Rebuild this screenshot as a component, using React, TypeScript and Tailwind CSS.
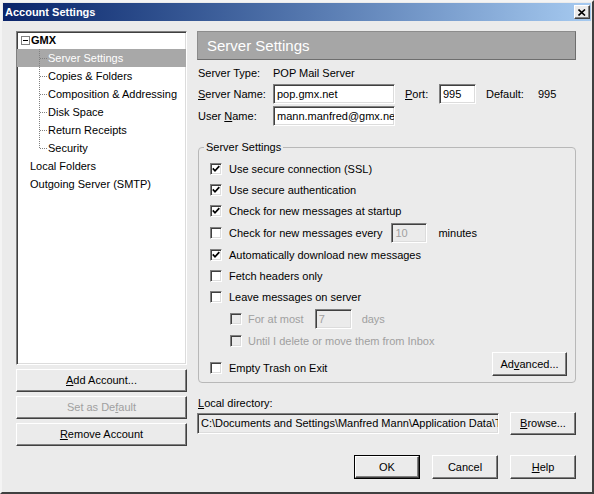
import React from "react";

const font = "font-['Liberation_Sans',Arial,sans-serif]";
const sunken =
  "border border-t-[#808080] border-l-[#808080] border-b-white border-r-white shadow-[inset_1px_1px_0_#404040,inset_-1px_-1px_0_#dcdcdc]";
const raised =
  "border border-t-white border-l-white border-b-[#404040] border-r-[#404040] shadow-[inset_-1px_-1px_0_#808080] bg-[#ebebeb]";

const U = ({ children }: { children: React.ReactNode }) => <span className="underline">{children}</span>;

const Btn = ({
  children,
  className = "",
  disabled = false,
}: {
  children: React.ReactNode;
  className?: string;
  disabled?: boolean;
}) => (
  <div
    className={`${raised} flex items-center justify-center ${disabled ? "text-[#a0a0a0]" : "text-black"} ${className}`}
  >
    <span>{children}</span>
  </div>
);

const Check = ({ checked = false, disabled = false }: { checked?: boolean; disabled?: boolean }) => (
  <span
    className={`${sunken} flex h-[12px] w-[12px] flex-none items-center justify-center ${
      disabled ? "bg-[#ebebeb]" : "bg-white"
    }`}
  >
    {checked && (
      <svg width="8" height="8" viewBox="0 0 8 8">
        <polyline points="0.8,3.4 3,5.8 7.3,1.2" fill="none" stroke="#000" strokeWidth="1.7" />
      </svg>
    )}
  </span>
);

const Connector = ({ last = false }: { last?: boolean }) => (
  <svg width="9" height="18" viewBox="0 0 9 18" className="flex-none">
    <line x1="0.5" y1="0" x2="0.5" y2={last ? 9 : 18} stroke="#808080" strokeDasharray="1 1" />
    <line x1="1" y1="9.5" x2="8" y2="9.5" stroke="#808080" strokeDasharray="1 1" />
  </svg>
);

const children = ["Server Settings", "Copies & Folders", "Composition & Addressing", "Disk Space", "Return Receipts", "Security"];

const Row = ({
  h,
  children,
  className = "",
}: {
  h: string;
  children: React.ReactNode;
  className?: string;
}) => <div className={`flex items-center ${h} ${className}`}>{children}</div>;

export default function App() {
  return (
    <div
      className={`${font} flex h-[494px] w-[594px] flex-col border-2 border-t-[#f4f4f4] border-l-[#f4f4f4] border-b-[#404040] border-r-[#404040] bg-[#ebebeb] p-[1px] text-[11px] leading-[13px] text-black`}
    >
      {/* title bar */}
      <div className="flex h-[18px] flex-none items-center justify-between bg-gradient-to-r from-[#0a246a] to-[#a6caf0] pl-[2px] pr-[1px]">
        <span className="text-[11px] font-bold text-white">Account Settings</span>
        <div className={`${raised} flex h-[14px] w-[16px] items-center justify-center`}>
          <svg width="8" height="7" viewBox="0 0 8 7">
            <path d="M0.5 0.5 L7 6.5 M7 0.5 L0.5 6.5" stroke="#000" strokeWidth="1.6" />
          </svg>
        </div>
      </div>

      <div className="flex flex-1 pl-[13px] pt-[10px]">
        {/* left column */}
        <div className="flex w-[171px] flex-col">
          <div className={`${sunken} h-[334px] bg-white`}>
            <div className="flex h-[17px] items-center pl-[4px]">
              <span className="flex h-[9px] w-[9px] items-center justify-center border border-[#808080] bg-white">
                <span className="h-[1px] w-[5px] bg-black" />
              </span>
              <span className="ml-[1px] font-bold">GMX</span>
            </div>
            {children.map((c, i) => (
              <div
                key={c}
                className={`flex h-[18px] items-center pl-[22px] ${i === 0 ? "bg-[#a8a8a8] text-white" : ""}`}
              >
                <Connector last={i === children.length - 1} />
                <span>{c}</span>
              </div>
            ))}
            <div className="flex h-[18px] items-center pl-[13px]">Local Folders</div>
            <div className="flex h-[18px] items-center pl-[13px]">Outgoing Server (SMTP)</div>
          </div>
          <Btn className="mt-[4px] h-[23px]">
            <U>A</U>dd Account...
          </Btn>
          <Btn className="mt-[4px] h-[23px]" disabled>
            Set as De<U>f</U>ault
          </Btn>
          <Btn className="mt-[4px] h-[23px]">
            <U>R</U>emove Account
          </Btn>
        </div>

        {/* right column */}
        <div className="ml-[10px] flex w-[379px] flex-col">
          <div className="flex h-[29px] items-center border border-t-[#8c8c8c] border-l-[#8c8c8c] border-b-[#6e6e6e] border-r-[#6e6e6e] bg-[#a6a6a6] pl-[9px] text-[15px] leading-[18px] text-white">
            Server Settings
          </div>

          <Row h="h-[18px]" className="mt-[4px] pl-[1px]">
            <span className="w-[75px]">Server Type:</span>
            <span>POP Mail Server</span>
          </Row>
          <Row h="h-[20px]" className="mt-[2px] pl-[1px]">
            <span className="w-[75px]">
              <U>S</U>erver Name:
            </span>
            <div className={`${sunken} flex h-[20px] w-[122px] items-center bg-white pl-[3px]`}>pop.gmx.net</div>
            <span className="ml-[10px] w-[34px]">
              <U>P</U>ort:
            </span>
            <div className={`${sunken} flex h-[20px] w-[37px] items-center bg-white pl-[3px]`}>995</div>
            <span className="ml-[10px] w-[52px]">Default:</span>
            <span>995</span>
          </Row>
          <Row h="h-[20px]" className="mt-[2px] pl-[1px]">
            <span className="w-[75px]">
              User <U>N</U>ame:
            </span>
            <div className={`${sunken} flex h-[20px] w-[122px] items-center overflow-hidden whitespace-nowrap bg-white pl-[3px]`}>
              mann.manfred@gmx.net
            </div>
          </Row>

          <fieldset className="ml-[1px] mt-[15px] rounded-[4px] border border-[#b8b8b8] pb-[4px] pl-[11px] pr-[8px]">
            <legend className="ml-[-6px] px-[2px] leading-[13px]">Server Settings</legend>
            <div className="flex flex-col pt-[4px]">
              <Row h="h-[22px]">
                <Check checked />
                <span className="ml-[7px]">Use secure connection (SSL)</span>
              </Row>
              <Row h="h-[20px]">
                <Check checked />
                <span className="ml-[7px]">Use secure authentication</span>
              </Row>
              <Row h="h-[22px]">
                <Check checked />
                <span className="ml-[7px]">Check for new messages at startup</span>
              </Row>
              <Row h="h-[22px]">
                <Check />
                <span className="ml-[7px]">Check for new messages every</span>
                <div className={`${sunken} ml-[9px] flex h-[20px] w-[36px] items-center bg-[#ebebeb] pl-[3px] text-[#a0a0a0]`}>
                  10
                </div>
                <span className="ml-[11px]">minutes</span>
              </Row>
              <Row h="h-[22px]">
                <Check checked />
                <span className="ml-[7px]">Automatically download new messages</span>
              </Row>
              <Row h="h-[20px]">
                <Check />
                <span className="ml-[7px]">Fetch headers only</span>
              </Row>
              <Row h="h-[22px]">
                <Check />
                <span className="ml-[7px]">Leave messages on server</span>
              </Row>
              <Row h="h-[22px]" className="pl-[20px] text-[#a0a0a0]">
                <Check disabled />
                <span className="ml-[6px]">For at most</span>
                <div className={`${sunken} ml-[11px] flex h-[20px] w-[37px] items-center bg-[#ebebeb] pl-[3px]`}>7</div>
                <span className="ml-[10px]">days</span>
              </Row>
              <Row h="h-[22px]" className="pl-[20px] text-[#a0a0a0]">
                <Check disabled />
                <span className="ml-[6px]">Until I delete or move them from Inbox</span>
              </Row>
              <div className="flex h-[26px] justify-between">
                <div className="flex h-[20px] items-center self-end">
                  <Check />
                  <span className="ml-[7px]">Empty Trash on Exit</span>
                </div>
                <Btn className="h-[24px] w-[75px]">
                  Ad<U>v</U>anced...
                </Btn>
              </div>
            </div>
          </fieldset>

          <div className="mt-[13px] flex h-[14px] items-center pl-[1px]">
            <span>
              <U>L</U>ocal directory:
            </span>
          </div>
          <div className="mt-[2px] flex items-center justify-between">
            <div className={`${sunken} flex h-[21px] w-[302px] items-center overflow-hidden whitespace-nowrap bg-[#ebebeb] pl-[3px]`}>
              C:\Documents and Settings\Manfred Mann\Application Data\Thunderbird\Profiles
            </div>
            <Btn className="h-[23px] w-[66px]">
              <U>B</U>rowse...
            </Btn>
          </div>

          <div className="mt-[20px] flex justify-end gap-[12px]">
            <div className="border border-black">
              <Btn className="h-[22px] w-[64px]">OK</Btn>
            </div>
            <Btn className="h-[24px] w-[66px]">Cancel</Btn>
            <Btn className="h-[24px] w-[66px]">
              <U>H</U>elp
            </Btn>
          </div>
        </div>
      </div>
    </div>
  );
}
